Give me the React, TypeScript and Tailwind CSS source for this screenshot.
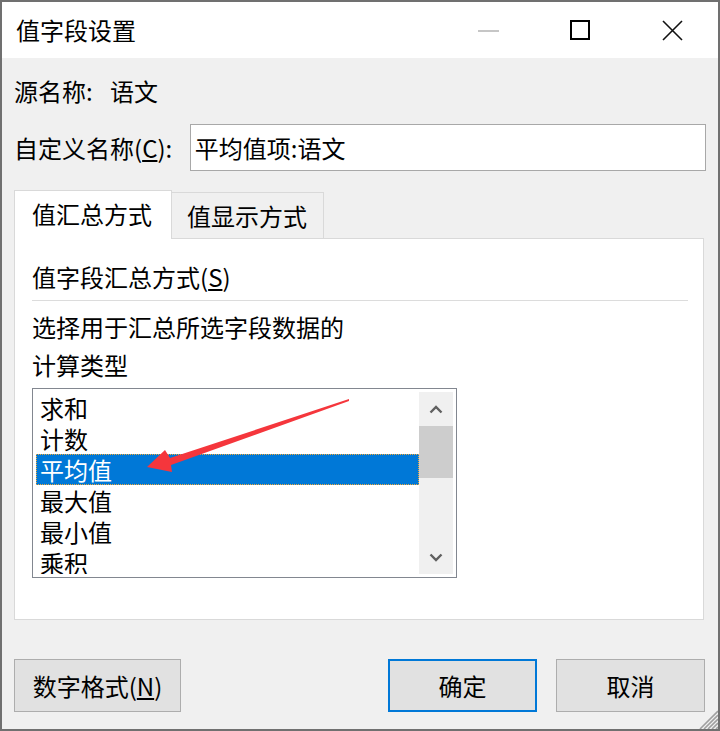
import React from "react";

const items = ["求和", "计数", "平均值", "最大值", "最小值", "乘积"];

const ChevronUp = () => (
  <svg width="14" height="9" viewBox="0 0 14 9">
    <path d="M1.5 7.5 L7 2 L12.5 7.5" fill="none" stroke="#606060" strokeWidth="2.4" />
  </svg>
);

const ChevronDown = () => (
  <svg width="14" height="9" viewBox="0 0 14 9">
    <path d="M1.5 1.5 L7 7 L12.5 1.5" fill="none" stroke="#606060" strokeWidth="2.4" />
  </svg>
);

const App: React.FC = () => {
  return (
    <div className="relative w-[720px] h-[731px] border-2 border-[#707070] flex flex-col bg-[#f0f0f0] text-black font-['Noto_Sans_CJK_SC','Microsoft_YaHei',sans-serif] text-[24px] leading-[32px] overflow-hidden">
      {/* title bar */}
      <div className="h-[56px] bg-white flex items-center shrink-0">
        <span className="pl-[14px]">值字段设置</span>
        <div className="ml-auto flex h-full">
          <div className="w-[92px] h-full flex items-center justify-center">
            <div className="w-[21px] h-[2px] bg-[#c6c6c6] mt-px" />
          </div>
          <div className="w-[92px] h-full flex items-center justify-center">
            <div className="w-[20px] h-[20px] border-2 border-black" />
          </div>
          <div className="w-[92px] h-full flex items-center justify-center">
            <svg width="21" height="21" viewBox="0 0 21 21">
              <path d="M1 1 L20 20 M20 1 L1 20" stroke="#111" strokeWidth="1.6" />
            </svg>
          </div>
        </div>
      </div>

      {/* body */}
      <div className="flex-1 px-[12px] flex flex-col">
        <div className="mt-[17px] flex">
          <span className="w-[96px]">源名称:</span>
          <span>语文</span>
        </div>

        <div className="mt-[17px] flex items-center">
          <span className="w-[176px]">
            自定义名称(<u className="underline-offset-2">C</u>):
          </span>
          <div className="w-[517px] h-[47px] border border-[#a8a8a8] bg-white flex items-center pl-[4px]">
            平均值项:语文
          </div>
        </div>

        {/* tabs */}
        <div className="mt-[19px] h-[48px] flex items-end">
          <div className="relative z-10 w-[158px] h-[49px] -mb-px bg-white border border-b-0 border-[#d9d9d9] flex items-center pl-[17px] pb-[2px]">
            值汇总方式
          </div>
          <div className="w-[152px] h-[46px] bg-[#f0f0f0] border border-l-0 border-b-0 border-[#d9d9d9] flex items-center pl-[15px]">
            值显示方式
          </div>
        </div>

        {/* panel */}
        <div className="w-[690px] h-[382px] bg-white border border-[#d9d9d9] pt-[22px] pl-[17px] pr-[15px] flex flex-col">
          <span>
            值字段汇总方式(<u className="underline-offset-2">S</u>)
          </span>
          <div className="mt-[7px] h-px bg-[#dcdcdc]" />
          <span className="mt-[7px] leading-[38px]">选择用于汇总所选字段数据的</span>
          <span className="leading-[38px]">计算类型</span>

          <div className="mt-[4px] w-[425px] h-[190px] border border-[#828790] bg-white p-[3px] flex">
            <div className="flex-1 flex flex-col overflow-hidden">
              {items.map((it) => (
                <div
                  key={it}
                  className={
                    it === "平均值"
                      ? "h-[31px] shrink-0 leading-[31px] pl-[4px] bg-[#0078d7] text-white outline-1 outline-dotted outline-[#f0a838] -outline-offset-1"
                      : "h-[31px] shrink-0 leading-[31px] pl-[4px]"
                  }
                >
                  {it}
                </div>
              ))}
            </div>
            <div className="w-[34px] bg-[#f0f0f0] flex flex-col">
              <div className="h-[34px] flex items-center justify-center">
                <ChevronUp />
              </div>
              <div className="h-[52px] bg-[#cdcdcd]" />
              <div className="flex-1" />
              <div className="h-[34px] flex items-center justify-center">
                <ChevronDown />
              </div>
            </div>
          </div>
        </div>

        {/* buttons */}
        <div className="mt-[39px] flex">
          <button className="w-[167px] h-[53px] bg-[#e1e1e1] border border-[#adadad] flex items-center justify-center">
            数字格式(<u className="underline-offset-2">N</u>)
          </button>
          <button className="ml-auto w-[149px] h-[53px] bg-[#e1e1e1] border-2 border-[#0078d7] flex items-center justify-center">
            确定
          </button>
          <button className="ml-[19px] mr-[1px] w-[149px] h-[53px] bg-[#e1e1e1] border border-[#adadad] flex items-center justify-center">
            取消
          </button>
        </div>
      </div>

      {/* resize grip */}
      <svg className="absolute right-0 bottom-0" width="20" height="20" viewBox="0 0 20 20">
        <path d="M20 2 L2 20 M20 6 L6 20 M20 10 L10 20 M20 14 L14 20 M20 18 L18 20" stroke="#a0a0a0" strokeWidth="1.6" />
      </svg>

      {/* red annotation arrow */}
      <svg className="absolute left-[-2px] top-[-2px] pointer-events-none" width="720" height="731" viewBox="0 0 720 731">
        <polygon
          points="349,399 170,458 165,450 147,467 172,472 171,465 349,401"
          fill="#f5363c"
        />
      </svg>
    </div>
  );
};

export default App;
